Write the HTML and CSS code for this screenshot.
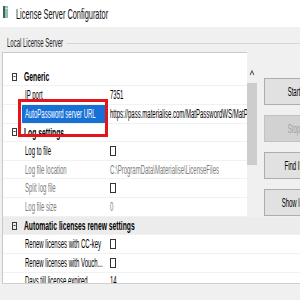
FILE: index.html
```html
<!DOCTYPE html>
<html lang="en">
<head>
<meta charset="utf-8">
<title>License Server Configurator</title>
<link rel="stylesheet" href="styles.css">
</head>
<body>
<div class="window">
  <header class="titlebar">
    <svg class="app-icon" width="10" height="12" viewBox="0 0 10 12" aria-hidden="true">
      <rect x="0" y="0" width="10" height="12" fill="#8cc2ab"/>
      <rect x="0" y="0" width="4" height="12" fill="#3f6157"/>
      <rect x="5" y="2" width="4" height="1" fill="#e8f4ee"/>
    </svg>
    <span class="title">License Server Configurator</span>
  </header>
  <div class="client">
    <div class="group-head">
      <span class="group-label">Local License Server</span>
      <span class="group-rule"></span>
    </div>
    <div class="main">
      <div class="props props-top">
        <div class="row cat">
          <span class="margin"><span class="toggle"></span></span>
          <span class="cat-label">Generic</span>
        </div>
        <div class="row">
          <span class="margin"></span>
          <span class="name">IP port</span>
          <span class="value">7351</span>
        </div>
        <div class="row">
          <span class="margin"></span>
          <span class="name selected">AutoPassword server URL</span>
          <span class="value">https://pass.materialise.com/MatPasswordWS/MatPasswordWS.svc</span>
        </div>
        <div class="row cat">
          <span class="margin"><span class="toggle"></span></span>
          <span class="cat-label">Log settings</span>
        </div>
        <div class="row">
          <span class="margin"></span>
          <span class="name">Log to file</span>
          <span class="value"><span class="check"></span></span>
        </div>
        <div class="row">
          <span class="margin"></span>
          <span class="name muted">Log file location</span>
          <span class="value muted">C:\ProgramData\Materialise\LicenseFiles</span>
        </div>
        <div class="row">
          <span class="margin"></span>
          <span class="name muted">Split log file</span>
          <span class="value"><span class="check"></span></span>
        </div>
        <div class="row">
          <span class="margin"></span>
          <span class="name muted">Log file size</span>
          <span class="value muted">0</span>
        </div>
      </div>

      <div class="scrollbar">
        <svg class="scroll-arrow" width="20" height="10" viewBox="0 0 20 10" aria-hidden="true">
          <path d="M6 7 L10 3 L14 7" fill="none" stroke="#505050" stroke-width="1.6"/>
        </svg>
        <div class="thumb"></div>
      </div>

      <div class="actions">
        <button class="btn" type="button">Start</button>
        <button class="btn" type="button" disabled>Stop</button>
        <button class="btn" type="button">Find IP</button>
        <button class="btn" type="button">Show log</button>
      </div>

      <div class="props props-bottom">
        <div class="row cat shaded">
          <span class="margin"><span class="toggle"></span></span>
          <span class="cat-label">Automatic licenses renew settings</span>
        </div>
        <div class="row">
          <span class="margin"></span>
          <span class="name">Renew licenses with CC-key</span>
          <span class="value"><span class="check"></span></span>
        </div>
        <div class="row">
          <span class="margin"></span>
          <span class="name">Renew licenses with Vouch...</span>
          <span class="value"><span class="check"></span></span>
        </div>
        <div class="row">
          <span class="margin"></span>
          <span class="name">Days till license expired</span>
          <span class="value">14</span>
        </div>
      </div>

      <div class="callout"></div>
    </div>
  </div>
</div>
</body>
</html>
```

FILE: styles.css
```css
html, body {
  margin: 0;
  padding: 0;
  width: 300px;
  height: 300px;
  overflow: hidden;
  background: #f0f0f0;
}

.window {
  width: 600px;
  height: 300px;
  transform: scaleX(0.5);
  transform-origin: 0 0;
  font-family: "Liberation Sans", Arial, sans-serif;
  font-size: 12px;
  color: #000;
  overflow: hidden;
  background: #f0f0f0;
}

/* title bar */
.titlebar {
  height: 27px;
  background: #fff;
  display: flex;
  align-items: center;
  padding-left: 6px;
  box-sizing: border-box;
}
.app-icon {
  flex: none;
  margin-top: -3px;
}
.title {
  margin-left: 16px;
  font-size: 14.8px;
  color: #111;
}

/* client area */
.client {
  height: 273px;
  background: #f0f0f0;
}

.group-head {
  height: 25px;
  box-sizing: border-box;
  padding: 7px 0 0 14px;
  display: flex;
  align-items: center;
}
.group-label {
  color: #222;
  white-space: nowrap;
}
.group-rule {
  flex: 1;
  height: 1px;
  background: #d6d6d6;
  margin-left: 6px;
}

.main {
  position: relative;
  display: grid;
  grid-template-columns: 490px 20px 14px 1fr;
  grid-template-rows: 164.8px 67.2px;
  padding-left: 4px;
}

/* property grid */
.props {
  background: #fff;
  border-left: 2px solid #c9c9c9;
  overflow: hidden;
}
.props-top {
  grid-column: 1;
  grid-row: 1;
  border-top: 1px solid #c9c9c9;
  padding-top: 14.7px;
}
.props-bottom {
  grid-column: 1 / -1;
  grid-row: 2;
  border-bottom: 1px solid #d0d0d0;
}

.row {
  display: grid;
  grid-template-columns: 38px 170px 1fr;
  height: 18.64px;
  align-items: center;
  box-sizing: border-box;
  border-bottom: 1px solid #f1f1f1;
}
.row > span {
  white-space: nowrap;
  overflow: hidden;
}
.margin {
  height: 100%;
  display: flex;
  align-items: center;
}
.name {
  height: 100%;
  display: flex;
  align-items: center;
  padding-left: 6px;
}
.value {
  padding-left: 6px;
  display: flex;
  align-items: center;
}
.muted {
  color: #7c7c7c;
}
.selected {
  background: #1670d6;
  color: #fff;
}

.cat-label {
  grid-column: 2 / 4;
  font-weight: bold;
  font-size: 13.5px;
  padding-left: 4px;
}
.shaded {
  background: #ececec;
}

.toggle {
  position: relative;
  margin-left: 18px;
  width: 10px;
  height: 8px;
  box-sizing: border-box;
  border-style: solid;
  border-color: #3a3a3a;
  border-width: 1px 2px;
}
.toggle::after {
  content: "";
  position: absolute;
  left: 1px;
  right: 1px;
  top: 2px;
  height: 1px;
  background: #3a3a3a;
}

.check {
  display: block;
  width: 12px;
  height: 10px;
  box-sizing: border-box;
  border-style: solid;
  border-color: #333;
  border-width: 1px 2px;
  background: #fff;
}

/* scrollbar */
.scrollbar {
  grid-column: 2;
  grid-row: 1;
  display: flex;
  flex-direction: column;
  padding-top: 16px;
}
.scroll-arrow {
  display: block;
}
.thumb {
  margin-top: 5px;
  height: 82px;
  background: #cdcdcd;
}

/* buttons */
.actions {
  grid-column: 4;
  grid-row: 1;
  display: flex;
  flex-direction: column;
  gap: 10px;
  padding-top: 26px;
}
.btn {
  width: 120px;
  height: 27px;
  flex: none;
  box-sizing: border-box;
  margin: 0;
  padding: 0;
  font-family: "Liberation Sans", Arial, sans-serif;
  font-size: 12px;
  color: #000;
  background: #e1e1e1;
  border-style: solid;
  border-color: #adadad;
  border-width: 1px 2px;
  text-align: center;
  white-space: nowrap;
}
.btn:disabled {
  background: #d2d2d2;
  border-color: #c2c2c2;
  color: #a0a0a0;
}

/* annotation frame over the selected row */
.callout {
  position: absolute;
  left: 36px;
  top: 47px;
  width: 180px;
  height: 38px;
  box-sizing: border-box;
  border-style: solid;
  border-color: #e3141c;
  border-width: 3px 6px;
  pointer-events: none;
}
```
